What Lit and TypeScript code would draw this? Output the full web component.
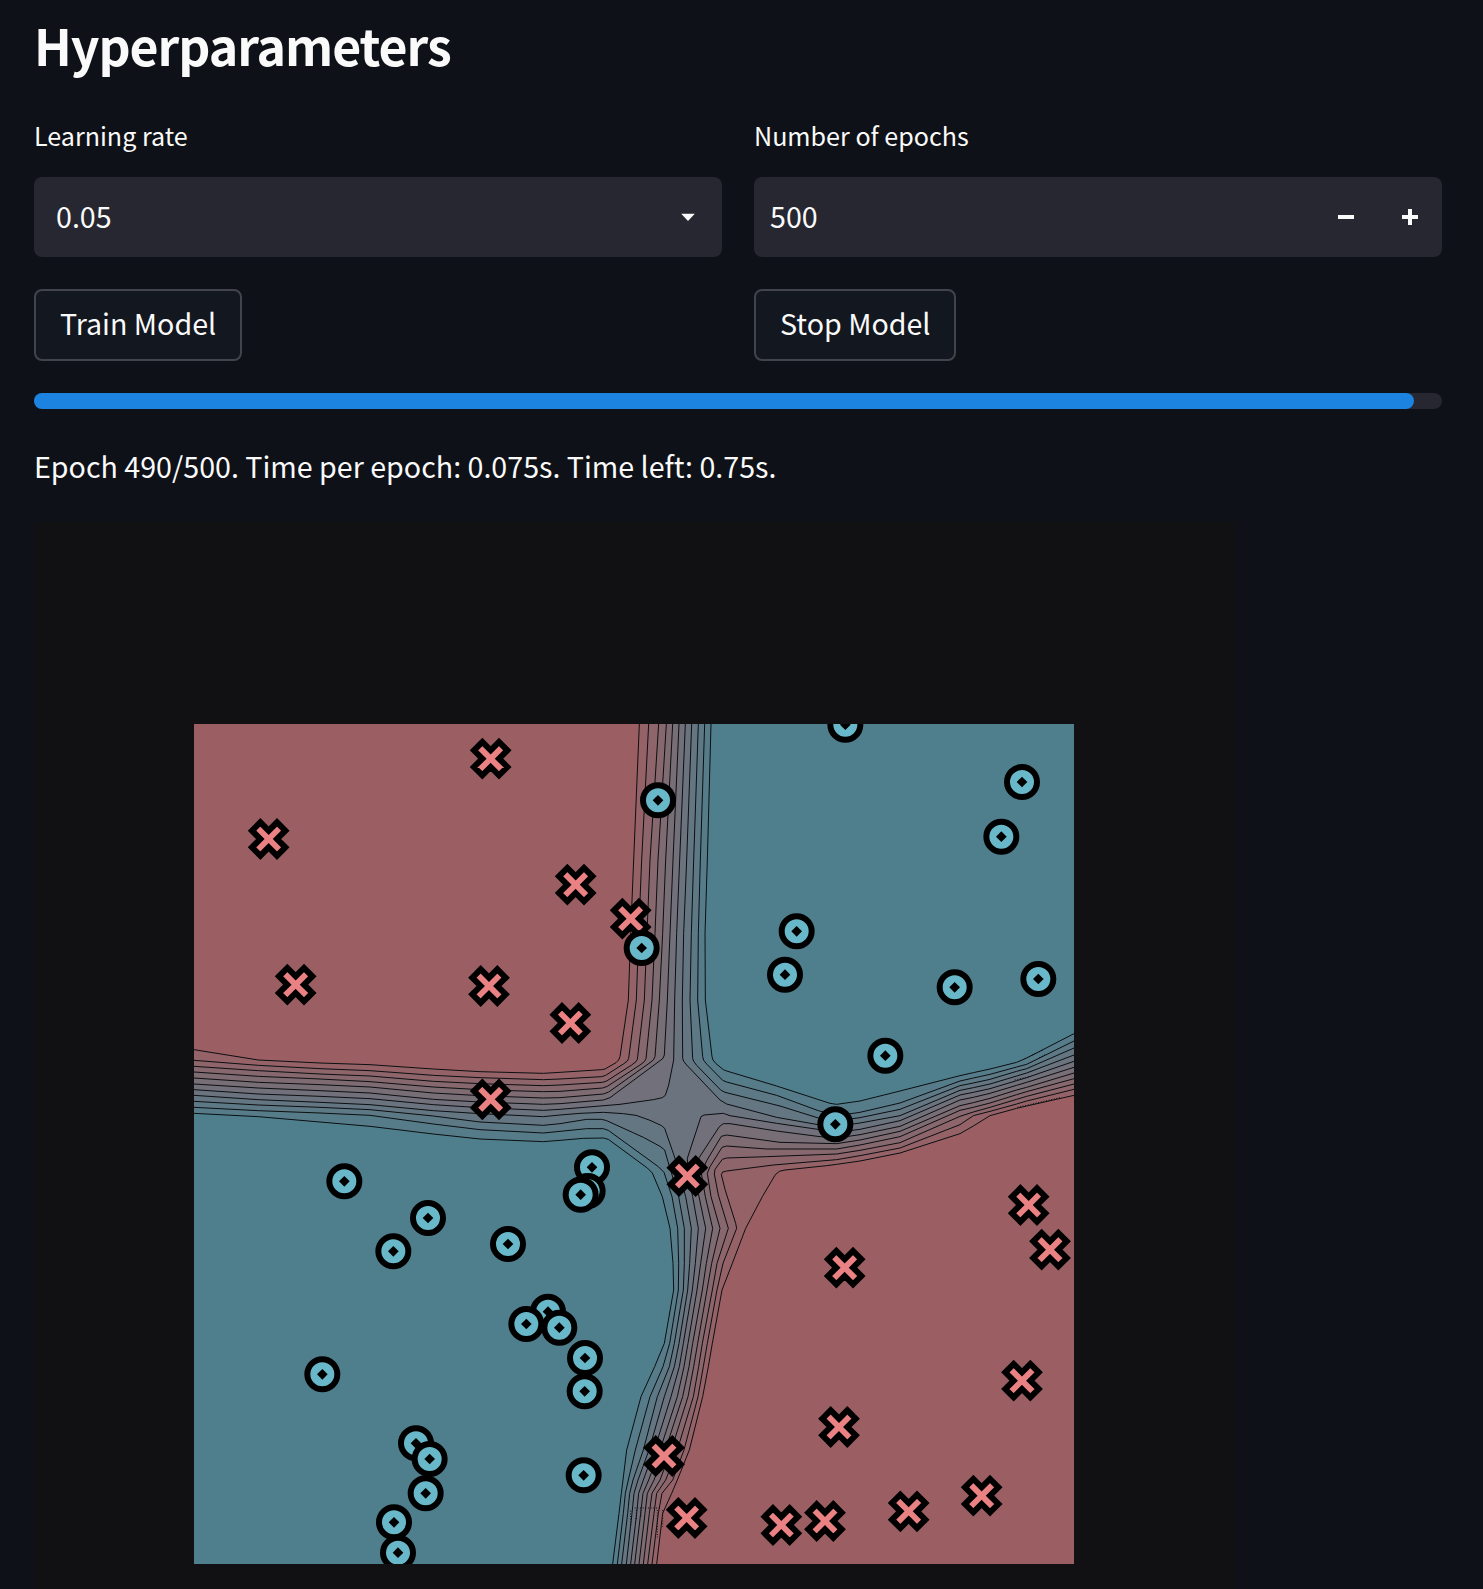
import { LitElement, html, svg, css } from "lit";
import { customElement, property } from "lit/decorators.js";

type Pt = [number, number];

// Plot space: three units per pixel.
const LEFT = -1098;
const RIGHT = 1542;
const TOP = -828;
const BOTTOM = 1692;

const LOW = [155, 95, 99];
const HIGH = [79, 127, 141];
const band = (i: number) =>
  `rgb(${LOW.map((v, k) => Math.round(v + ((HIGH[k] - v) * i) / 11)).join(",")})`;

// Boundary crossings of the upper arm, level 1 to 11.
const ARM_TOP: Array<[number, number[]]> = [
  [TOP, [238, 266, 296, 319, 338, 357, 376, 395, 415, 434, 453]],
  [-420, [221, 245, 270, 294, 317, 339, 359, 380, 401, 421, 442]],
  [-200, [212, 236, 261, 285, 308, 330, 350, 371, 394, 415, 435]],
  [0, [205, 229, 253, 276, 298, 322, 344, 367, 390, 413, 436]],
];

// Boundary crossings of the lower arm, level 1 to 11.
const ARM_BOTTOM: Array<[number, number[]]> = [
  [685, [557, 530, 505, 480, 458, 437, 415, 394, 373, 353, 330]],
  [790, [517, 489, 471, 455, 439, 422, 406, 389, 373, 356, 339]],
  [870, [486, 471, 457, 441, 427, 411, 397, 383, 370, 355, 341]],
  [1030, [457, 442, 427, 413, 398, 384, 370, 357, 343, 329, 313]],
  [1100, [445, 430, 416, 401, 387, 372, 358, 343, 328, 309, 284]],
  [1190, [428, 414, 400, 384, 368, 352, 333, 313, 292, 270, 243]],
  [1350, [388, 372, 352, 334, 316, 300, 283, 267, 250, 226, 200]],
  [1440, [352, 338, 317, 300, 282, 266, 250, 234, 219, 205, 189]],
  [1480, [335, 306, 290, 276, 262, 249, 236, 222, 209, 196, 184]],
  [1540, [308, 295, 282, 268, 255, 242, 230, 216, 203, 190, 177]],
  [BOTTOM, [290, 276, 263, 250, 237, 224, 212, 199, 185, 172, 158]],
];

// Boundary crossings of the left arm, level 1 to 11.
const ARM_LEFT: Array<[number, number[]]> = [
  [-50, [220, 239, 257, 275, 294, 313, 331, 350, 376, 399, 425]],
  [-240, [215, 233, 251, 269, 287, 306, 323, 341, 366, 389, 417]],
  [-380, [207, 226, 244, 261, 279, 298, 314, 332, 348, 372, 402]],
  [-570, [194, 212, 228, 245, 261, 279, 296, 314, 329, 346, 379]],
  [-720, [189, 206, 222, 237, 254, 272, 289, 307, 322, 339, 366]],
  [-905, [180, 196, 212, 229, 247, 264, 282, 299, 315, 332, 350]],
  [LEFT, [149, 181, 199, 216, 234, 252, 269, 286, 304, 322, 340]],
];

// Boundary crossings of the right arm, level 1 to 11.
const ARM_RIGHT: Array<[number, number[]]> = [
  [830, [493, 479, 462, 447, 431, 414, 397, 379, 362, 347, 313]],
  [900, [483, 467, 451, 435, 420, 404, 388, 369, 353, 337, 303]],
  [1020, [459, 444, 428, 410, 394, 379, 362, 347, 328, 309, 273]],
  [1200, [401, 374, 349, 331, 317, 300, 285, 271, 257, 243, 227]],
  [1240, [378, 347, 336, 322, 308, 292, 277, 263, 249, 234, 218]],
  [1290, [347, 334, 322, 309, 295, 280, 266, 252, 238, 223, 207]],
  [1370, [325, 312, 298, 284, 270, 256, 242, 228, 214, 201, 187]],
  [1400, [318, 303, 289, 275, 262, 247, 233, 219, 206, 193, 174]],
  [RIGHT, [286, 268, 252, 236, 219, 202, 184, 165, 144, 123, 101]],
];

// The bends that join two arms, keyed by level.
const BEND_TL: Record<number, Pt[]> = {
  1: [[180, 170], [176, 180], [168, 188], [135, 207], [125, 209], [0, 217]],
  2: [[206, 175], [202, 183], [190, 192], [137, 226], [125, 230], [0, 237]],
  3: [[232, 178], [228, 185], [215, 195], [140, 243], [128, 247], [0, 255]],
  4: [[258, 176], [253, 185], [240, 195], [142, 259], [128, 264], [0, 274]],
  5: [[285, 170], [280, 180], [270, 188], [146, 276], [130, 282], [0, 293]],
  6: [[313, 165], [309, 175], [300, 182], [150, 293], [130, 300], [0, 311]],
  7: [[341, 180], [326, 255], [316, 286], [307, 293], [280, 299], [180, 313], [0, 328]],
};
const BEND_TR: Record<number, Pt[]> = {
  8: [[368, 175], [371, 184], [380, 195], [480, 300], [500, 312], [650, 352], [780, 375]],
  9: [[398, 175], [401, 184], [410, 196], [482, 270], [495, 277], [660, 318], [775, 354]],
  10: [[428, 170], [431, 181], [440, 192], [488, 241], [500, 246], [650, 286], [775, 332]],
  11: [[456, 170], [459, 180], [468, 191], [490, 209], [500, 213], [650, 258], [810, 310]],
};
const BEND_BL: Record<number, Pt[]> = {
  8: [[0, 345], [60, 340], [130, 337], [190, 341], [228, 346], [270, 361], [305, 377], [314, 385], [345, 475], [377, 590]],
  9: [[0, 371], [80, 358], [125, 358], [140, 362], [250, 412], [300, 439], [314, 450], [324, 485], [356, 590]],
  10: [[0, 394], [80, 386], [130, 386], [145, 391], [295, 500], [312, 517], [336, 590]],
  11: [[0, 421], [70, 415], [130, 414], [145, 418], [262, 504], [277, 519], [307, 590]],
};
const BEND_BR: Record<number, Pt[]> = {
  1: [[800, 497], [675, 510], [658, 514], [646, 524], [607, 590]],
  2: [[640, 495], [500, 513], [488, 516], [484, 524], [495, 568], [527, 670]],
  3: [[620, 470], [500, 474], [487, 478], [465, 508], [463, 522], [475, 585]],
  4: [[620, 447], [500, 438], [486, 442], [450, 500], [442, 520], [453, 590]],
  5: [[660, 427], [500, 405], [484, 409], [440, 482], [424, 520], [436, 590]],
  6: [[780, 410], [650, 393], [510, 371], [490, 371], [478, 380], [418, 472], [404, 520], [417, 590]],
  7: [[780, 389], [650, 370], [510, 347], [490, 340], [432, 345], [423, 350], [382, 475], [385, 530], [398, 590]],
};

const vertical = (rows: Array<[number, number[]]>, l: number): Pt[] =>
  rows.map(([y, xs]) => [xs[l - 1], y] as Pt);
const horizontal = (rows: Array<[number, number[]]>, l: number): Pt[] =>
  rows.map(([x, ys]) => [x, ys[l - 1]] as Pt);
const toPath = (pts: Pt[]) => "M" + pts.map((p) => p.join(" ")).join("L");

interface Contour {
  line: string;
  area: string;
  fill: string;
}

const contour = (pts: Pt[], corner: Pt, fill: string): Contour => ({
  line: toPath(pts),
  area: toPath([...pts, corner]) + "Z",
  fill,
});

const CONTOURS: Contour[] = [];
for (let l = 7; l >= 1; l--) {
  CONTOURS.push(
    contour([...vertical(ARM_TOP, l), ...BEND_TL[l], ...horizontal(ARM_LEFT, l)], [LEFT, TOP], band(l - 1)),
    contour(
      [...horizontal(ARM_RIGHT, l).reverse(), ...BEND_BR[l], ...vertical(ARM_BOTTOM, l)],
      [RIGHT, BOTTOM],
      band(l - 1),
    ),
  );
}
for (let l = 8; l <= 11; l++) {
  CONTOURS.push(
    contour([...vertical(ARM_TOP, l), ...BEND_TR[l], ...horizontal(ARM_RIGHT, l)], [RIGHT, TOP], band(l)),
    contour(
      [...horizontal(ARM_LEFT, l).reverse(), ...BEND_BL[l], ...vertical(ARM_BOTTOM, l)],
      [LEFT, BOTTOM],
      band(l),
    ),
  );
}

// Speckles where the sampled surface is almost flat along a boundary.
const SPECKLES = [
  "M1394 176L1452 149",
  "M1438 173L1458 163",
  "M1364 240L1412 229",
  "M1372 322L1500 293",
  "M216 1524H304",
  "M212 1532V1575",
  "M229 1530V1562",
  "M243 1530V1550",
  "M292 1530V1612",
  "M308 1530V1580",
];

const CROSSES: Pt[] = [
  [-208, -724], [-874, -483], [-793, -46], [-213, -42], [47, -346], [212, -244], [31, 69],
  [-208, 298], [382, 528], [854, 803], [1406, 615], [1470, 749], [1386, 1142], [837, 1281],
  [312, 1368], [380, 1554], [664, 1575], [795, 1563], [1046, 1534], [1265, 1487],
];

const CIRCLES: Pt[] = [
  [294, -599], [245, -156], [710, -206], [675, -76], [856, -826], [1386, -654], [1324, -490],
  [1184, -38], [1435, -63], [976, 167], [826, 373], [-647, 544], [96, 502], [83, 573], [62, 584],
  [-396, 654], [-500, 754], [-156, 732], [-36, 935], [-101, 972], [-2, 983], [75, 1074],
  [74, 1174], [-713, 1123], [-432, 1330], [-391, 1377], [-403, 1480], [-498, 1567], [-486, 1658],
  [71, 1426],
];

const N = 25;
const CROSS_PATH = `M0 ${N}l${N} ${N}l${N} ${-N}l${-N} ${-N}l${N} ${-N}l${-N} ${-N}l${-N} ${N}l${-N} ${-N}l${-N} ${N}l${N} ${N}l${-N} ${N}l${N} ${N}Z`;

@customElement("decision-plot")
export class DecisionPlot extends LitElement {
  static styles = css`
    :host {
      display: block;
      box-sizing: border-box;
      width: 1200px;
      height: 1200px;
      padding: 202px 160px 0;
      background: #111114;
    }
    .plot {
      display: block;
      width: 880px;
      height: 840px;
    }
    .line {
      fill: none;
      stroke: #0c0f12;
      stroke-width: 3;
      stroke-linejoin: round;
    }
    .speckle {
      fill: none;
      stroke: #0c0f12;
      stroke-width: 3;
      stroke-dasharray: 3 5;
    }
    .cross {
      fill: #ea8284;
      stroke: #000;
      stroke-width: 18;
    }
    .circle {
      fill: #69b8c9;
      stroke: #000;
      stroke-width: 18;
    }
    .dot {
      fill: #000;
    }
  `;

  render() {
    return html`
      <svg class="plot" viewBox="${LEFT} ${TOP} ${RIGHT - LEFT} ${BOTTOM - TOP}">
        <rect x=${LEFT} y=${TOP} width="2640" height="2520" fill=${band(7)}></rect>
        ${CONTOURS.map((c) => svg`<path d=${c.area} fill=${c.fill}></path>`)}
        ${CONTOURS.map((c) => svg`<path class="line" d=${c.line}></path>`)}
        ${SPECKLES.map((d) => svg`<path class="speckle" d=${d}></path>`)}
        ${CROSSES.map(([x, y]) => svg`<path class="cross" d=${CROSS_PATH} transform="translate(${x} ${y})"></path>`)}
        ${CIRCLES.map(
          ([x, y]) => svg`<g transform="translate(${x} ${y})">
            <circle class="circle" r="45"></circle>
            <path class="dot" d="M0 -16L16 0L0 16L-16 0Z"></path>
          </g>`,
        )}
      </svg>
    `;
  }
}

@customElement("app-root")
export class AppRoot extends LitElement {
  @property({ type: Number }) epoch = 490;
  @property({ type: Number }) epochs = 500;

  static styles = css`
    :host {
      display: flex;
      flex-direction: column;
      box-sizing: border-box;
      height: 1589px;
      padding: 0 41px 0 34px;
      overflow: hidden;
      background: #0e1117;
      color: #fafafa;
      font-family: "Noto Sans CJK SC", "Noto Sans CJK JP", "Open Sans", sans-serif;
      font-size: 28.63px;
    }
    .title {
      flex: none;
      margin: 0;
      height: 112px;
      padding: 12px 0 0;
      box-sizing: border-box;
      font-size: 50px;
      line-height: 64px;
      font-weight: 700;
      letter-spacing: -1.05px;
      white-space: nowrap;
    }
    .fields {
      flex: none;
      display: grid;
      grid-template-columns: 688px 688px;
      column-gap: 32px;
    }
    .label {
      display: block;
      height: 65px;
      font-size: 25.1px;
      line-height: 47px;
    }
    .control {
      display: flex;
      align-items: center;
      justify-content: space-between;
      box-sizing: border-box;
      height: 80px;
      border-radius: 8px;
      background: #262730;
      line-height: 78px;
    }
    .value {
      height: 80px;
    }
    .select {
      padding: 0 26px 0 22px;
    }
    .number {
      padding: 0 24px 0 16px;
    }
    .steps {
      display: flex;
      gap: 48px;
    }
    .icon {
      display: block;
      fill: #fafafa;
    }
    .button {
      justify-self: start;
      display: flex;
      box-sizing: border-box;
      height: 72px;
      margin-top: 32px;
      padding: 0 24px;
      border: 2px solid #41444c;
      border-radius: 8px;
      background: #131720;
      color: inherit;
      font: inherit;
      line-height: 64px;
      white-space: nowrap;
    }
    .caption {
      height: 68px;
    }
    .track {
      flex: none;
      height: 16px;
      margin-top: 32px;
      border-radius: 8px;
      background: #262730;
    }
    .fill {
      height: 16px;
      border-radius: 8px;
      background: #1c83e1;
    }
    .status {
      flex: none;
      height: 113px;
      line-height: 113px;
      white-space: nowrap;
    }
    .chart {
      flex: none;
    }
  `;

  render() {
    return html`
      <h2 class="title">Hyperparameters</h2>
      <div class="fields">
        <label class="label">Learning rate</label>
        <label class="label">Number of epochs</label>
        <div class="control select">
          <span class="value">0.05</span>
          <svg class="icon" width="16" height="10" viewBox="0 0 16 10"><path d="M1.2 1.7h13.6L8 9Z"></path></svg>
        </div>
        <div class="control number">
          <span class="value">${this.epochs}</span>
          <div class="steps">
            <svg class="icon" width="16" height="16" viewBox="0 0 16 16"><path d="M0 6h16v4H0Z"></path></svg>
            <svg class="icon" width="16" height="16" viewBox="0 0 16 16"><path d="M6 0h4v6h6v4h-6v6H6v-6H0V6h6Z"></path></svg>
          </div>
        </div>
        <button class="button"><span class="caption">Train Model</span></button>
        <button class="button"><span class="caption">Stop Model</span></button>
      </div>
      <div class="track">
        <div class="fill" style="width:${(this.epoch / this.epochs) * 100}%"></div>
      </div>
      <div class="status">Epoch ${this.epoch}/${this.epochs}. Time per epoch: 0.075s. Time left: 0.75s.</div>
      <decision-plot class="chart"></decision-plot>
    `;
  }
}
